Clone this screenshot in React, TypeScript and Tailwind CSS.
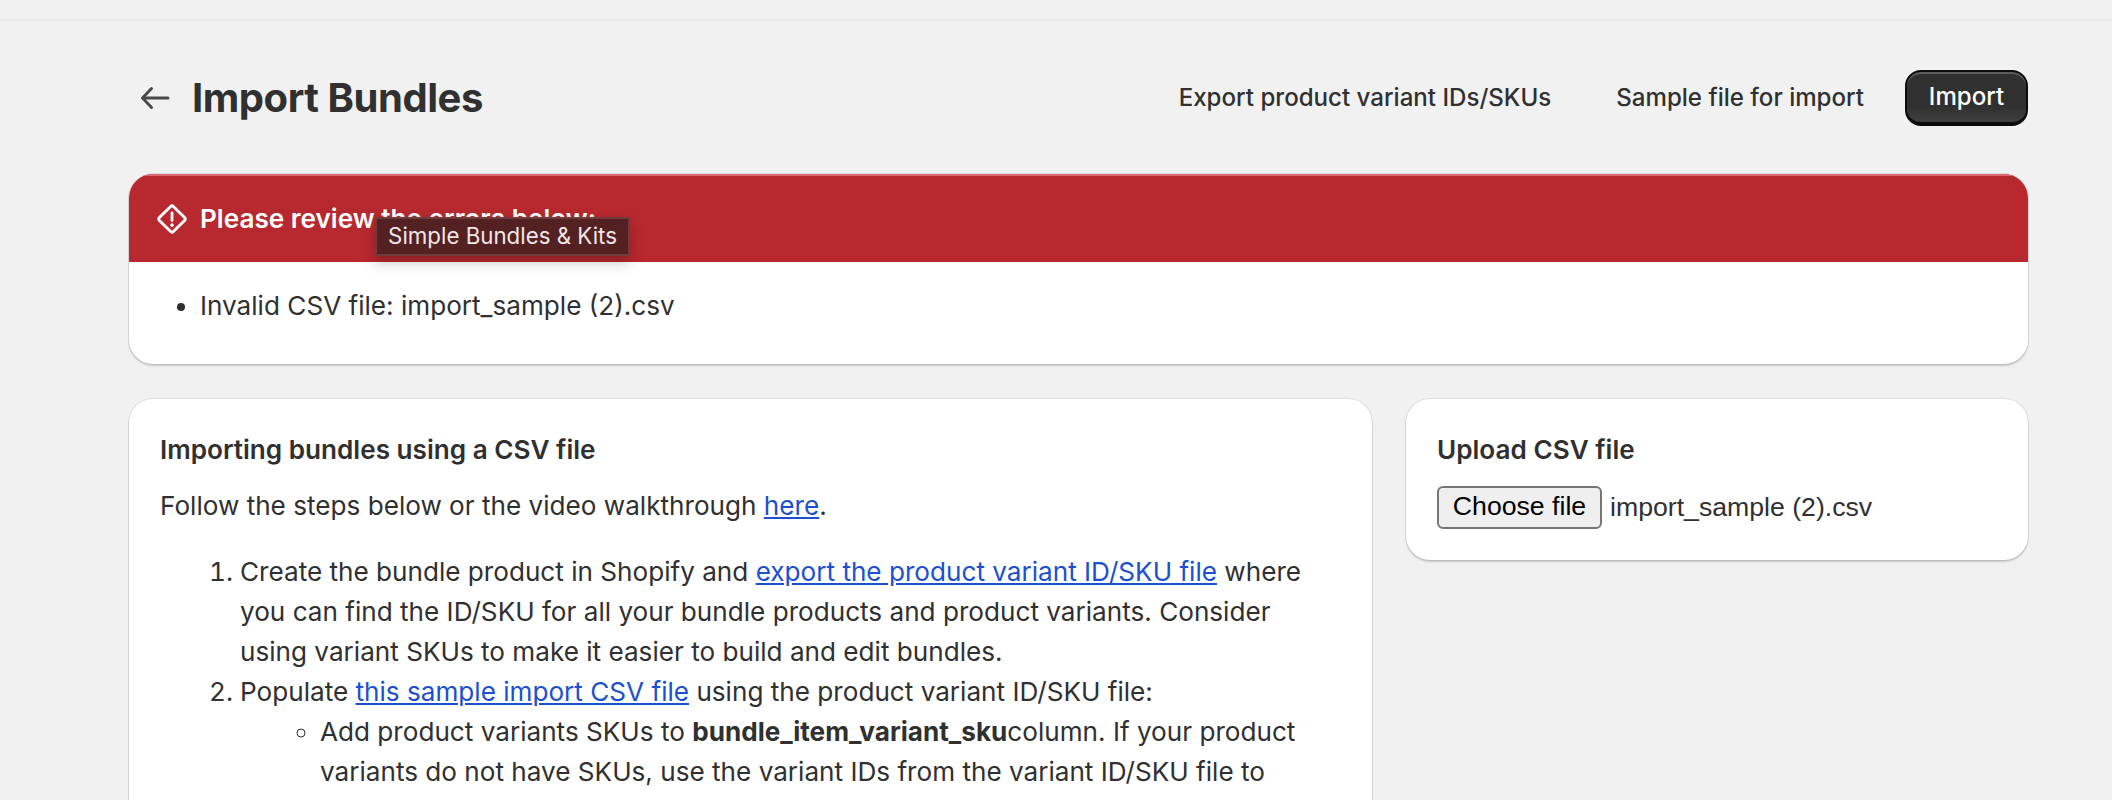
import React from "react";

const cardClass =
  "bg-white rounded-[24px] overflow-hidden shadow-[0_2px_2px_rgba(26,26,26,0.18),0_0_0_1px_rgba(0,0,0,0.08)]";

const BackArrow = () => (
  <svg width="30" height="30" viewBox="0 0 30 30" fill="none" stroke="#4a4a4a" strokeWidth="3" strokeLinecap="round" strokeLinejoin="round">
    <path d="M28 15H3" />
    <path d="M11.5 5.5L2.5 15l9 9.5" />
  </svg>
);

const AlertDiamond = () => (
  <svg width="30" height="30" viewBox="0 0 30 30" fill="none" stroke="white" strokeWidth="2.8" strokeLinecap="round" strokeLinejoin="round">
    <path d="M13.6 2.4a2 2 0 0 1 2.8 0l11.2 11.2a2 2 0 0 1 0 2.8L16.4 27.6a2 2 0 0 1-2.8 0L2.4 16.4a2 2 0 0 1 0-2.8z" />
    <path d="M15 9v7.5" />
    <path d="M15 21v.3" strokeWidth="3.4" />
  </svg>
);

const DocLink = ({ children }: { children: React.ReactNode }) => (
  <a href="#" className="text-[#1c50d0] underline">
    {children}
  </a>
);

const App = () => {
  return (
    <div className="h-[800px] overflow-hidden bg-[#f1f1f1] text-[26.13px] leading-[40px] text-[#303030] font-['Inter',sans-serif] antialiased">
      <div className="h-[21px] border-b-2 border-[#ebebeb]" />

      <div className="ml-[129px] w-[1899px] pt-[49px]">
        <div className="flex items-center h-[56px]">
          <div className="ml-[11px] mr-[22px] flex items-center">
            <BackArrow />
          </div>
          <h1 className="text-[40px] font-bold leading-[56px] tracking-[-0.45px] text-[#303030]">Import Bundles</h1>
          <div className="ml-auto flex items-center">
            <button className="text-[24.1px] font-medium mr-[65px]">Export product variant IDs/SKUs</button>
            <button className="text-[24.1px] font-medium mr-[41px]">Sample file for import</button>
            <button className="h-[56px] w-[123px] rounded-[16px] bg-gradient-to-b from-[#303030] from-70% to-[#404040] text-white text-[24.1px] font-medium border-2 border-[#0c0c0c] border-b-4 shadow-[inset_0_2px_0_rgba(255,255,255,0.22)]">
              Import
            </button>
          </div>
        </div>

        <div className={`mt-[48px] ${cardClass}`}>
          <div className="relative h-[88px] bg-[#b8292f] border-t-2 border-[#dc6a70] flex items-center pl-[28px] gap-[13px] text-white font-semibold">
            <AlertDiamond />
            <span>Please review the errors below:</span>
            <div className="absolute left-[246px] top-[41px] h-[39px] w-[255px] pb-[2px] flex items-center justify-center bg-[#542122] border-2 border-[#6e3a3a] text-[22.3px] font-normal text-[#f3e6e6] shadow-[0_6px_14px_rgba(0,0,0,0.25)]">
              Simple Bundles &amp; Kits
            </div>
          </div>
          <ul className="list-disc pl-[71px] pt-[24px] pb-[38px]">
            <li>Invalid CSV file: import_sample (2).csv</li>
          </ul>
        </div>

        <div className="mt-[35px] flex items-start gap-[34px]">
          <div className={`w-[1243px] pl-[31px] pr-[32px] pt-[31px] pb-[32px] ${cardClass}`}>
            <h2 className="font-semibold mb-[16px]">Importing bundles using a CSV file</h2>
            <p>
              Follow the steps below or the video walkthrough <DocLink>here</DocLink>.
            </p>
            <ol className="list-decimal pl-[80px] mt-[26px]">
              <li>
                Create the bundle product in Shopify and{" "}
                <DocLink>export the product variant ID/SKU file</DocLink> where you can find the ID/SKU for all your
                bundle products and product variants. Consider using variant SKUs to make it easier to build and edit
                bundles.
              </li>
              <li>
                Populate <DocLink>this sample import CSV file</DocLink> using the product variant ID/SKU file:
                <ul className="list-[circle] pl-[80px]">
                  <li>
                    Add product variants SKUs to <b className="font-bold">bundle_item_variant_sku</b>column. If your
                    product variants do not have SKUs, use the variant IDs from the variant ID/SKU file to
                  </li>
                </ul>
              </li>
            </ol>
          </div>

          <div className={`flex-1 pl-[31px] pr-[32px] pt-[31px] pb-[31px] ${cardClass}`}>
            <h2 className="font-semibold mb-[16px]">Upload CSV file</h2>
            <div className="flex items-center h-[43px] font-['Liberation_Sans',sans-serif] text-[26.67px]">
              <button className="h-[43px] w-[165px] pb-[4px] leading-[30px] rounded-[6px] border-2 border-[#767676] bg-[#efefef] text-black">
                Choose file
              </button>
              <span className="ml-[8px] mb-[1px]">import_sample (2).csv</span>
            </div>
          </div>
        </div>
      </div>
    </div>
  );
};

export default App;
